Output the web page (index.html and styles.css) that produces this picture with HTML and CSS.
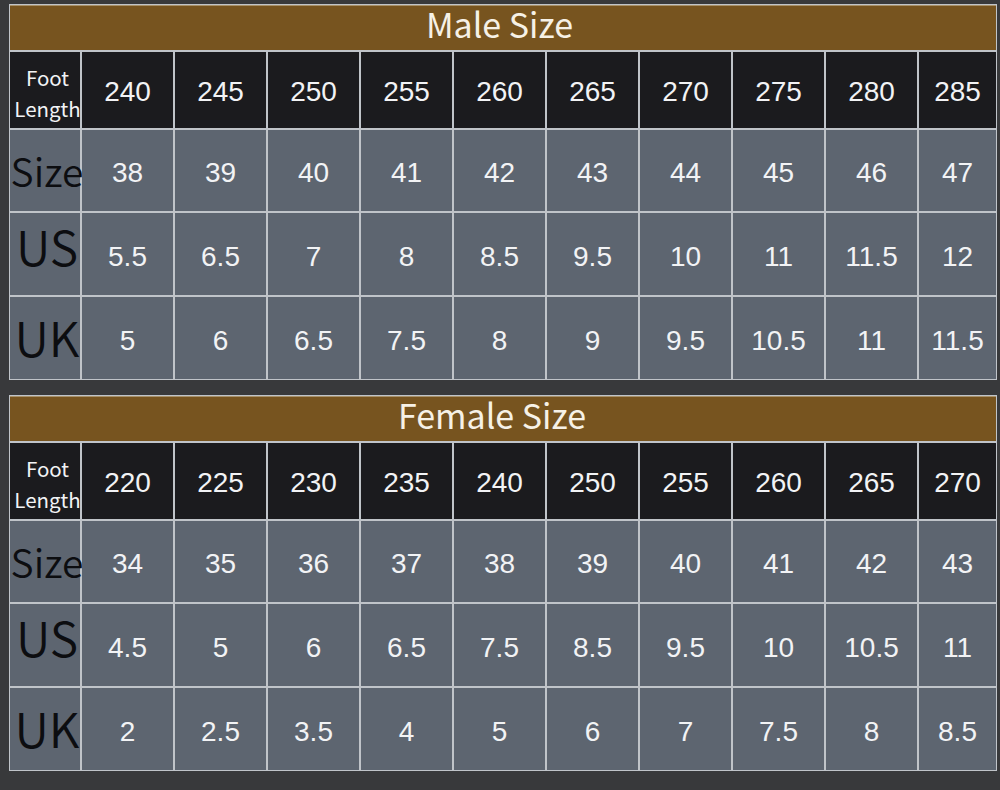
FILE: index.html
```html
<!DOCTYPE html>
<html lang="en">
<head>
<meta charset="utf-8">
<title>Size Chart</title>
<link rel="stylesheet" href="styles.css">
</head>
<body>
<div class="page">
  <div class="chart">
    <div class="title title-male">Male Size</div>
    <div class="cell head label-small"><span>Foot</span><span>Length</span></div>
    <div class="cell head">240</div><div class="cell head">245</div><div class="cell head">250</div><div class="cell head">255</div><div class="cell head">260</div><div class="cell head">265</div><div class="cell head">270</div><div class="cell head">275</div><div class="cell head">280</div><div class="cell head">285</div>
    <div class="cell body label size-r1">Size</div>
    <div class="cell body r1">38</div><div class="cell body r1">39</div><div class="cell body r1">40</div><div class="cell body r1">41</div><div class="cell body r1">42</div><div class="cell body r1">43</div><div class="cell body r1">44</div><div class="cell body r1">45</div><div class="cell body r1">46</div><div class="cell body r1">47</div>
    <div class="cell body label big us">US</div>
    <div class="cell body">5.5</div><div class="cell body">6.5</div><div class="cell body">7</div><div class="cell body">8</div><div class="cell body">8.5</div><div class="cell body">9.5</div><div class="cell body">10</div><div class="cell body">11</div><div class="cell body">11.5</div><div class="cell body">12</div>
    <div class="cell body label big uk">UK</div>
    <div class="cell body">5</div><div class="cell body">6</div><div class="cell body">6.5</div><div class="cell body">7.5</div><div class="cell body">8</div><div class="cell body">9</div><div class="cell body">9.5</div><div class="cell body">10.5</div><div class="cell body">11</div><div class="cell body">11.5</div>
  </div>

  <div class="chart">
    <div class="title title-female">Female Size</div>
    <div class="cell head label-small"><span>Foot</span><span>Length</span></div>
    <div class="cell head">220</div><div class="cell head">225</div><div class="cell head">230</div><div class="cell head">235</div><div class="cell head">240</div><div class="cell head">250</div><div class="cell head">255</div><div class="cell head">260</div><div class="cell head">265</div><div class="cell head">270</div>
    <div class="cell body label size-r1">Size</div>
    <div class="cell body r1">34</div><div class="cell body r1">35</div><div class="cell body r1">36</div><div class="cell body r1">37</div><div class="cell body r1">38</div><div class="cell body r1">39</div><div class="cell body r1">40</div><div class="cell body r1">41</div><div class="cell body r1">42</div><div class="cell body r1">43</div>
    <div class="cell body label big us">US</div>
    <div class="cell body">4.5</div><div class="cell body">5</div><div class="cell body">6</div><div class="cell body">6.5</div><div class="cell body">7.5</div><div class="cell body">8.5</div><div class="cell body">9.5</div><div class="cell body">10</div><div class="cell body">10.5</div><div class="cell body">11</div>
    <div class="cell body label big uk">UK</div>
    <div class="cell body">2</div><div class="cell body">2.5</div><div class="cell body">3.5</div><div class="cell body">4</div><div class="cell body">5</div><div class="cell body">6</div><div class="cell body">7</div><div class="cell body">7.5</div><div class="cell body">8</div><div class="cell body">8.5</div>
  </div>
</div>
</body>
</html>
```

FILE: styles.css
```css
html, body {
  margin: 0;
  padding: 0;
  background: #38393b;
}

.page {
  width: 1000px;
  height: 790px;
  padding-top: 4px;
  padding-left: 9px;
  box-sizing: border-box;
  display: flex;
  flex-direction: column;
  gap: 15px;
}

.chart {
  width: 988px;
  box-sizing: border-box;
  display: grid;
  grid-template-columns: 70px repeat(9, 91px) 77px;
  grid-template-rows: 45px 76px 81px 82px 82px;
  gap: 2px;
  padding: 1px;
  background: #c0c4c9;
}

.title {
  grid-column: 1 / -1;
  background: #77541f;
  color: #f6f1e6;
  font-family: "Noto Sans CJK SC", "Source Sans Pro", "Noto Sans", sans-serif;
  font-size: 34px;
  line-height: 38px;
  text-align: center;
  box-shadow: inset 0 1px 0 #a8916a;
}

.title-male {
  padding-right: 7px;
}

.title-female {
  padding-right: 22px;
}

.cell {
  display: flex;
  align-items: center;
  justify-content: center;
  font-family: "Liberation Sans", Arial, sans-serif;
  font-size: 28px;
  color: #f2f3f5;
}

.head {
  background: #1b1b1e;
  padding-top: 3px;
}

.body {
  background: #5d6570;
  padding-top: 6px;
}

.body.r1 {
  padding-top: 4px;
}

.label-small {
  flex-direction: column;
  font-family: "Noto Sans CJK SC", "Source Sans Pro", "Noto Sans", sans-serif;
  font-size: 20.5px;
  line-height: 31px;
  white-space: nowrap;
  padding-top: 5px;
  padding-left: 5px;
}

.label {
  font-family: "Noto Sans CJK SC", "Source Sans Pro", "Noto Sans", sans-serif;
  font-weight: 350;
  color: #0c0d10;
  white-space: nowrap;
  overflow: visible;
  padding-top: 0;
  padding-left: 4px;
}

.size-r1 {
  font-size: 39px;
  padding-bottom: 2px;
}

.big {
  font-size: 48px;
}

.big.us {
  padding-bottom: 18px;
}

.big.uk {
  padding-bottom: 4px;
}
```
